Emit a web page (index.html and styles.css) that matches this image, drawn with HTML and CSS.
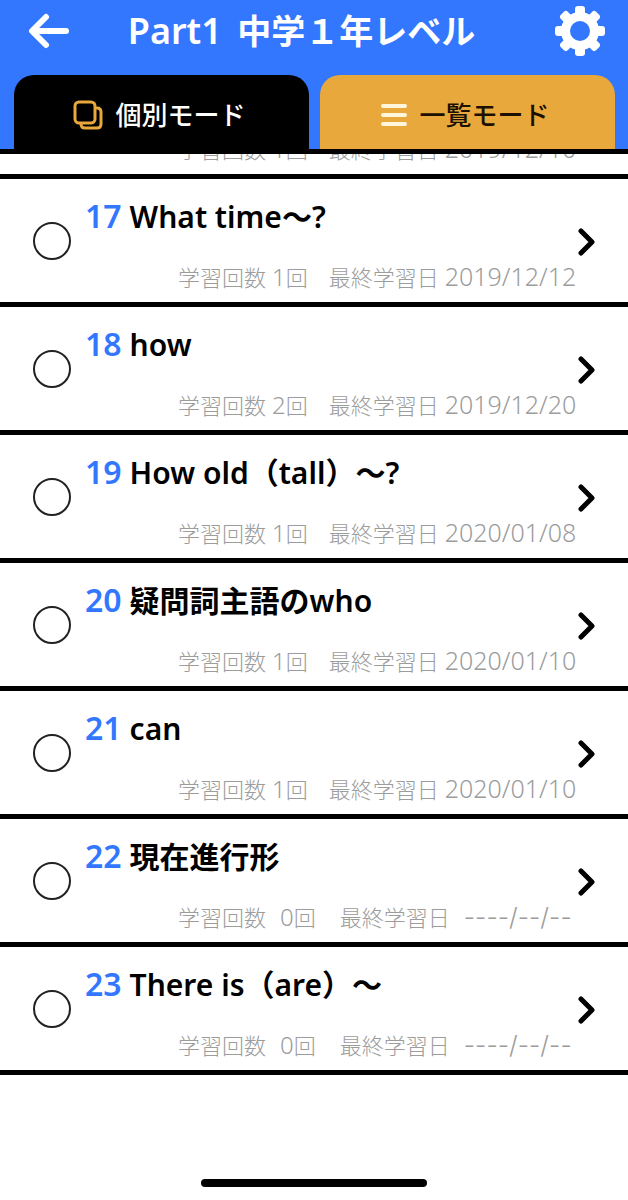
FILE: index.html
```html
<!DOCTYPE html>
<html lang="ja">
<head>
<meta charset="utf-8">
<meta name="viewport" content="width=device-width, initial-scale=1">
<title>Part1 中学１年レベル</title>
<link rel="stylesheet" href="styles.css">
</head>
<body>
<svg class="sprite" aria-hidden="true">
  <symbol id="chevron" viewBox="0 0 18 28"><path d="M3 3 14 14 3 25" fill="none" stroke="currentColor" stroke-width="5" stroke-linecap="round" stroke-linejoin="round"/></symbol>
</svg>
<div class="app">
  <header class="header">
    <div class="bar">
      <button class="icon-button" type="button" aria-label="戻る">
        <svg width="42" height="36" viewBox="0 0 42 36" fill="none" stroke="currentColor" stroke-width="6" stroke-linecap="round" stroke-linejoin="round"><path d="M18 4 4 18 18 32M5 18H38"/></svg>
      </button>
      <h1 class="title">Part1 <span class="title-ja">中学１年レベル</span></h1>
      <button class="icon-button" type="button" aria-label="設定">
        <svg width="50" height="50" viewBox="-25 -25 50 50">
          <g fill="currentColor">
            <rect x="-5" y="-25" width="10" height="12" rx="3"/>
            <rect x="-5" y="-25" width="10" height="12" rx="3" transform="rotate(45)"/>
            <rect x="-5" y="-25" width="10" height="12" rx="3" transform="rotate(90)"/>
            <rect x="-5" y="-25" width="10" height="12" rx="3" transform="rotate(135)"/>
            <rect x="-5" y="-25" width="10" height="12" rx="3" transform="rotate(180)"/>
            <rect x="-5" y="-25" width="10" height="12" rx="3" transform="rotate(225)"/>
            <rect x="-5" y="-25" width="10" height="12" rx="3" transform="rotate(270)"/>
            <rect x="-5" y="-25" width="10" height="12" rx="3" transform="rotate(315)"/>
          </g>
          <circle r="14.5" fill="none" stroke="currentColor" stroke-width="9"/>
        </svg>
      </button>
    </div>
    <nav class="tabs">
      <button class="tab tab-single" type="button">
        <svg width="30" height="30" viewBox="0 0 30 30" fill="none" stroke="#e8a83c" stroke-width="3" stroke-linejoin="round" stroke-linecap="round"><rect x="2" y="2" width="20" height="21" rx="4"/><path d="M24 8Q28 8 28 12V24Q28 28 24 28H12Q8 28 8 24"/></svg>
        <span>個別モード</span>
      </button>
      <button class="tab tab-list" type="button">
        <svg width="26" height="24" viewBox="0 0 26 24" stroke="#fff6dc" stroke-width="4" stroke-linecap="round"><path d="M2 3H24M2 12H24M2 21H24"/></svg>
        <span>一覧モード</span>
      </button>
    </nav>
  </header>

  <main class="main">
    <ul class="list">
      <li class="row row-scrolled">
        <div class="lesson-wrap">
          <span class="meta"><span>学習回数</span><span class="count"><span class="num">1</span>回</span><span>最終学習日</span><span class="date">2019/12/10</span></span>
        </div>
      </li>
      <li class="row">
        <input class="check" type="checkbox" aria-label="17を選択">
        <a class="lesson" href="#l17">
          <span class="name"><span class="no">17</span><span>What time<span class="ja">～</span>?</span></span>
          <span class="meta"><span>学習回数</span><span class="count"><span class="num">1</span>回</span><span>最終学習日</span><span class="date">2019/12/12</span></span>
          <svg class="chevron" aria-hidden="true"><use href="#chevron"/></svg>
        </a>
      </li>
      <li class="row">
        <input class="check" type="checkbox" aria-label="18を選択">
        <a class="lesson" href="#l18">
          <span class="name"><span class="no">18</span><span>how</span></span>
          <span class="meta"><span>学習回数</span><span class="count"><span class="num">2</span>回</span><span>最終学習日</span><span class="date">2019/12/20</span></span>
          <svg class="chevron" aria-hidden="true"><use href="#chevron"/></svg>
        </a>
      </li>
      <li class="row">
        <input class="check" type="checkbox" aria-label="19を選択">
        <a class="lesson" href="#l19">
          <span class="name"><span class="no">19</span><span>How old<span class="ja">（</span>tall<span class="ja">）～</span>?</span></span>
          <span class="meta"><span>学習回数</span><span class="count"><span class="num">1</span>回</span><span>最終学習日</span><span class="date">2020/01/08</span></span>
          <svg class="chevron" aria-hidden="true"><use href="#chevron"/></svg>
        </a>
      </li>
      <li class="row">
        <input class="check" type="checkbox" aria-label="20を選択">
        <a class="lesson" href="#l20">
          <span class="name"><span class="no">20</span><span><span class="ja">疑問詞主語の</span>who</span></span>
          <span class="meta"><span>学習回数</span><span class="count"><span class="num">1</span>回</span><span>最終学習日</span><span class="date">2020/01/10</span></span>
          <svg class="chevron" aria-hidden="true"><use href="#chevron"/></svg>
        </a>
      </li>
      <li class="row">
        <input class="check" type="checkbox" aria-label="21を選択">
        <a class="lesson" href="#l21">
          <span class="name"><span class="no">21</span><span>can</span></span>
          <span class="meta"><span>学習回数</span><span class="count"><span class="num">1</span>回</span><span>最終学習日</span><span class="date">2020/01/10</span></span>
          <svg class="chevron" aria-hidden="true"><use href="#chevron"/></svg>
        </a>
      </li>
      <li class="row">
        <input class="check" type="checkbox" aria-label="22を選択">
        <a class="lesson" href="#l22">
          <span class="name"><span class="no">22</span><span><span class="ja">現在進行形</span></span></span>
          <span class="meta"><span>学習回数</span><span class="count count-zero"><span class="num">0</span>回</span><span>最終学習日</span><span class="date date-empty">----/--/--</span></span>
          <svg class="chevron" aria-hidden="true"><use href="#chevron"/></svg>
        </a>
      </li>
      <li class="row">
        <input class="check" type="checkbox" aria-label="23を選択">
        <a class="lesson" href="#l23">
          <span class="name"><span class="no">23</span><span>There is<span class="ja">（</span>are<span class="ja">）～</span></span></span>
          <span class="meta"><span>学習回数</span><span class="count count-zero"><span class="num">0</span>回</span><span>最終学習日</span><span class="date date-empty">----/--/--</span></span>
          <svg class="chevron" aria-hidden="true"><use href="#chevron"/></svg>
        </a>
      </li>
    </ul>
  </main>
  <div class="home-indicator"></div>
</div>
</body>
</html>
```
FILE: styles.css
```css
* { box-sizing: border-box; }
body {
  margin: 0;
  background: #fff;
  color: #000;
  font-family: "Noto Sans", "Noto Sans CJK JP", sans-serif;
}
button { border: 0; padding: 0; background: none; color: inherit; font: inherit; cursor: pointer; }
svg { display: block; }
.sprite { position: absolute; width: 0; height: 0; }
.app { display: flex; flex-direction: column; min-height: 100vh; }

.header { background: #3377ff; border-bottom: 5px solid #000; }
.bar {
  display: flex;
  align-items: center;
  height: 75px;
  padding: 0 23px 14px 28px;
  color: #fff;
}
.title {
  flex: 1;
  margin: 0;
  padding-right: 22px;
  font-size: 36px;
  font-weight: 600;
  line-height: 48px;
  text-align: center;
  white-space: nowrap;
}
.title-ja { margin-left: 6px; font-family: "Noto Sans CJK JP", sans-serif; font-size: 34px; font-weight: 600; }
.tabs { display: grid; grid-template-columns: 1fr 1fr; gap: 11px; padding: 0 13px 0 14px; }
.tab {
  display: flex;
  align-items: center;
  justify-content: center;
  height: 74px;
  padding: 6px 4px 0 0;
  gap: 12px;
  border-radius: 20px 20px 0 0;
  font-size: 26px;
  font-weight: 500;
  line-height: 36px;
}
.tab-single { background: #000; color: #fff; }
.tab-list { background: #e8a83c; color: #1c1000; }

.main { flex: 1; }
.list { margin: 0; padding: 0; list-style: none; border-bottom: 5px solid #000; }
.row {
  display: flex;
  align-items: center;
  height: 128px;
  padding-left: 33px;
  border-top: 5px solid #000;
}
.row-scrolled { align-items: flex-end; height: 20px; border-top: 0; overflow: hidden; }
.lesson-wrap { padding: 0 0 9px 52px; }
.check {
  appearance: none;
  flex: none;
  width: 38px;
  height: 38px;
  margin: 0;
  border: 2px solid #222;
  border-radius: 50%;
  background: #fff;
}
.check:checked { background: #3377ff; }
.lesson {
  flex: 1;
  display: grid;
  grid-template-columns: 1fr 18px;
  align-content: space-between;
  height: 123px;
  padding: 18px 32px 9px 14px;
  color: inherit;
  text-decoration: none;
}
.name {
  display: flex;
  align-items: baseline;
  gap: 8px;
  font-size: 30px;
  font-weight: 600;
  line-height: 38px;
  white-space: nowrap;
}
.no { color: #3377ff; font-size: 32px; }
.name .ja { font-family: "Noto Sans CJK JP", sans-serif; font-weight: 700; line-height: 1; }
.meta {
  grid-column: 1;
  display: flex;
  align-items: baseline;
  gap: 6px;
  padding-left: 93px;
  color: #9c9c9c;
  font-size: 22px;
  font-weight: 300;
  line-height: 32px;
  white-space: nowrap;
}
.num { font-size: 24px; }
.date { font-size: 25px; }
.date-empty { margin-left: 8px; font-family: Inter, "Noto Sans", sans-serif; }
.count { margin-right: 15px; }
.count-zero { margin-left: 8px; margin-right: 18px; }
.chevron { grid-column: 2; grid-row: 1 / 3; align-self: center; width: 18px; height: 28px; margin-top: -7px; }

.home-indicator { width: 36%; height: 8px; margin: 0 auto 13px; border-radius: 4px; background: #000; }
```
